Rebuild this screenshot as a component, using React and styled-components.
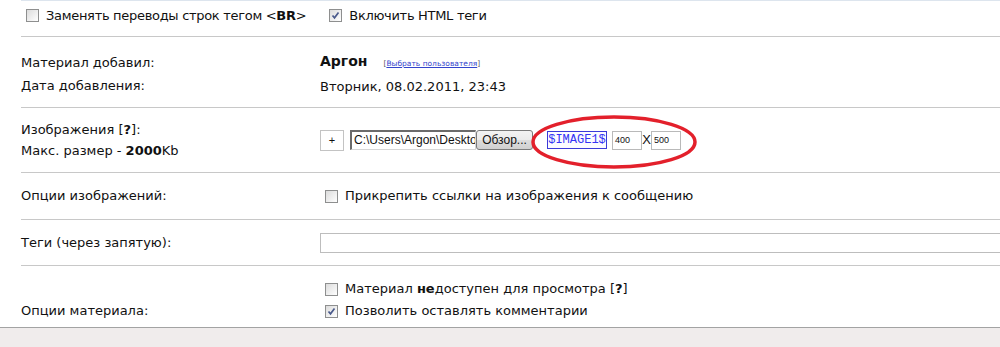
import React from "react";
import styled, { createGlobalStyle } from "styled-components";

const textColor = "#111";
const lineColor = "#c8c8c8";
const labelWidth = "299px";

const GlobalStyle = createGlobalStyle`
  html, body {
    margin: 0;
    padding: 0;
    background: #fff;
  }
  body {
    font-family: "DejaVu Sans", Verdana, sans-serif;
    font-size: 13px;
    color: ${textColor};
  }
`;

const Page = styled.div`
  width: 1000px;
  height: 347px;
  display: flex;
  flex-direction: column;
  overflow: hidden;
`;

const Form = styled.div`
  height: 327px;
  overflow: hidden;
  padding-left: 21px;
`;

const TopRow = styled.div`
  border-top: 1px solid #dde5ee;
  border-bottom: 1px solid ${lineColor};
  display: flex;
  align-items: center;
  padding: 0 0 6px 5px;
  height: 29px;
  letter-spacing: -0.3px;
`;

const Row = styled.div`
  display: grid;
  grid-template-columns: ${labelWidth} 1fr;
  align-items: center;
  height: ${({ h }) => h}px;
  padding-top: ${({ pt }) => pt || 0}px;
  border-bottom: ${({ last }) => (last ? "none" : `1px solid ${lineColor}`)};
`;

const Label = styled.div`
  line-height: ${({ lh }) => lh || 22}px;
  white-space: nowrap;
`;

const Value = styled.div`
  display: flex;
  flex-direction: ${({ column }) => (column ? "column" : "row")};
  align-items: ${({ column }) => (column ? "flex-start" : "center")};
  line-height: ${({ lh }) => lh || 22}px;
  white-space: nowrap;
`;

const CheckLine = styled.label`
  display: flex;
  align-items: center;
  margin-left: ${({ indent }) => indent || 0}px;
  margin-right: ${({ gapRight }) => gapRight || 0}px;
  line-height: 22px;
  white-space: nowrap;
`;

const Box = styled.span`
  width: 11px;
  height: 11px;
  border: 1px solid #8e8f8f;
  background: linear-gradient(135deg, #dcdcdc 0%, #f4f4f4 70%, #fff 100%);
  margin-right: 7px;
  display: inline-flex;
  align-items: center;
  justify-content: center;
  flex: none;
`;

const Checkbox = ({ checked }) => (
  <Box>
    {checked && (
      <svg width="9" height="9" viewBox="0 0 9 9">
        <path d="M1.5 4.5 L3.5 6.8 L7.5 1.5" fill="none" stroke="#4a5a8c" strokeWidth="1.7" />
      </svg>
    )}
  </Box>
);

const Bold = styled.b`
  font-weight: bold;
`;

const UserName = styled.b`
  font-weight: bold;
  font-size: 14px;
  margin-right: 16px;
`;

const SmallLink = styled.span`
  font-size: 7.5px;
  color: #555;
  a {
    color: #3344cc;
    text-decoration: underline;
  }
`;

const Controls = styled.div`
  display: flex;
  align-items: center;
  position: relative;
  font-family: "Liberation Sans", Arial, sans-serif;
`;

const PlusButton = styled.div`
  width: 22px;
  height: 19px;
  border: 1px solid #c3c3c3;
  background: #fff;
  display: flex;
  align-items: center;
  justify-content: center;
  font-size: 11px;
  margin-right: 6px;
`;

const FileText = styled.div`
  width: 121px;
  height: 17px;
  border-style: solid;
  border-width: 2px 1px 1px 2px;
  border-color: #6b6b6b #d6d6d6 #d6d6d6 #6b6b6b;
  padding-left: 2px;
  font-size: 12px;
  line-height: 17px;
  overflow: hidden;
  white-space: nowrap;
  background: #fff;
`;

const BrowseButton = styled.div`
  width: 55px;
  height: 18px;
  border: 1px solid #7a7a7a;
  border-radius: 3px;
  background: linear-gradient(#f3f3f3 0%, #ebebeb 50%, #dddddd 51%, #d0d0d0 100%);
  font-size: 12px;
  line-height: 18px;
  text-align: center;
  overflow: hidden;
  margin-right: 14px;
`;

const CodeBox = styled.div`
  width: 58px;
  height: 16px;
  border: 1px solid #3a3ad8;
  background: #fbfbff;
  color: #3434f4;
  font-family: "Liberation Mono", "Courier New", monospace;
  font-size: 12px;
  line-height: 16px;
  text-align: center;
  margin-right: 5px;
`;

const SizeBox = styled.div`
  width: 26px;
  height: 17px;
  border: 1px solid #b9b9b9;
  font-size: 9px;
  line-height: 17px;
  padding-left: 2px;
  background: #fff;
`;

const Times = styled.span`
  font-size: 13px;
  width: 9px;
  text-align: center;
`;

const Highlight = styled.svg`
  position: absolute;
  left: 210px;
  top: -15px;
  pointer-events: none;
`;

const TextField = styled.div`
  height: 18px;
  width: 700px;
  border: 1px solid #bdbdbd;
  background: #fff;
`;

const StatusBar = styled.div`
  height: 19px;
  border-top: 1px solid #a3a3a3;
  background: #f0ecec;
`;

export default function App() {
  return (
    <>
      <GlobalStyle />
      <Page>
        <Form>
          <TopRow>
            <CheckLine gapRight={23}>
              <Checkbox />
              <span>
                Заменять переводы строк тегом &lt;<Bold>BR</Bold>&gt;
              </span>
            </CheckLine>
            <CheckLine>
              <Checkbox checked />
              <span>Включить HTML теги</span>
            </CheckLine>
          </TopRow>

          <Row h={67} pt={3}>
            <Label lh={23}>
              Материал добавил:
              <br />
              Дата добавления:
            </Label>
            <Value column lh={23}>
              <span>
                <UserName>Аргон</UserName>
                <SmallLink>
                  [<a>Выбрать пользователя</a>]
                </SmallLink>
              </span>
              <span>Вторник, 08.02.2011, 23:43</span>
            </Value>
          </Row>

          <Row h={64}>
            <Label lh={21}>
              Изображения [<Bold>?</Bold>]:
              <br />
              Макс. размер - <Bold>2000</Bold>Kb
            </Label>
            <Value>
              <Controls>
                <PlusButton>+</PlusButton>
                <FileText>C:\Users\Argon\Desktop\image.jpg</FileText>
                <BrowseButton>Обзор...</BrowseButton>
                <CodeBox>$IMAGE1$</CodeBox>
                <SizeBox>400</SizeBox>
                <Times>X</Times>
                <SizeBox>500</SizeBox>
                <Highlight width="170" height="56" viewBox="0 0 170 56">
                  <ellipse cx="84" cy="28" rx="81" ry="25" fill="none" stroke="#e3202b" strokeWidth="3.5" />
                </Highlight>
              </Controls>
            </Value>
          </Row>

          <Row h={46}>
            <Label>Опции изображений:</Label>
            <Value>
              <CheckLine indent={5}>
                <Checkbox />
                <span>Прикрепить ссылки на изображения к сообщению</span>
              </CheckLine>
            </Value>
          </Row>

          <Row h={45}>
            <Label>Теги (через запятую):</Label>
            <Value>
              <TextField />
            </Value>
          </Row>

          <Row h={90} last>
            <Label>Опции материала:</Label>
            <Value column>
              <CheckLine indent={5}>
                <Checkbox />
                <span>
                  Материал <Bold>не</Bold>доступен для просмотра [<Bold>?</Bold>]
                </span>
              </CheckLine>
              <CheckLine indent={5}>
                <Checkbox checked />
                <span>Позволить оставлять комментарии</span>
              </CheckLine>
              <CheckLine indent={5}>
                <Checkbox />
                <span>
                  Закрепить материал вверху списка материалов [<Bold>?</Bold>]
                </span>
              </CheckLine>
            </Value>
          </Row>
        </Form>
        <StatusBar />
      </Page>
    </>
  );
}
